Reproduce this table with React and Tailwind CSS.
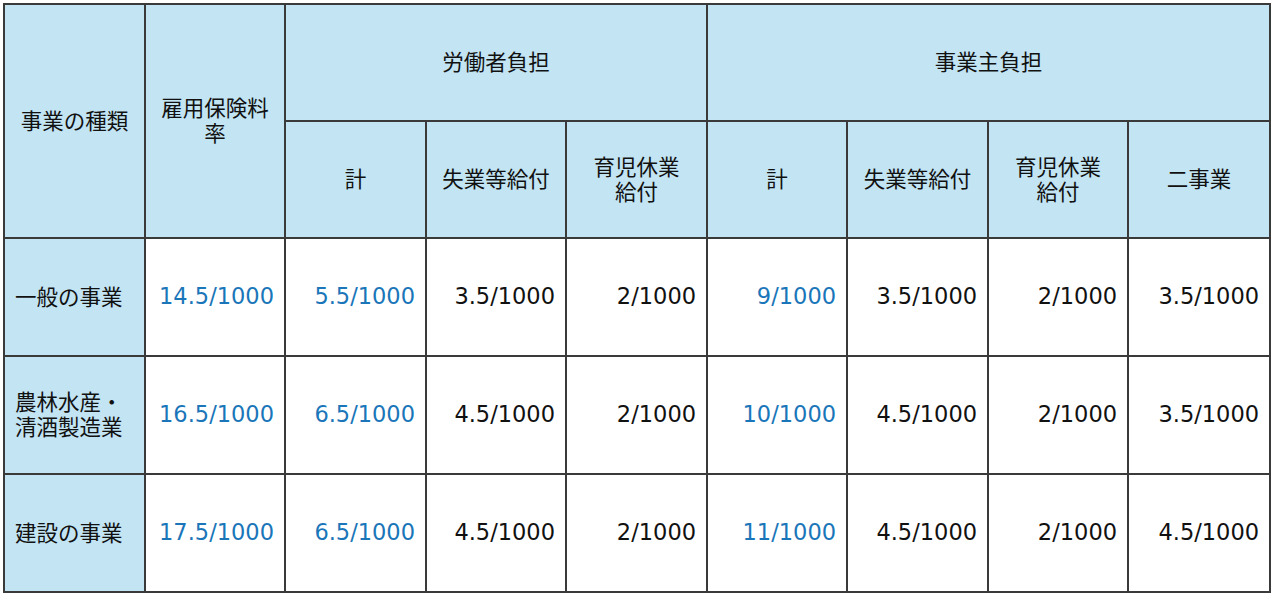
import React from 'react';

// 雇用保険料率の表
const rows = [
  { label: '一般の事業', rate: '14.5/1000', wTotal: '5.5/1000', wUnemp: '3.5/1000', wChild: '2/1000', eTotal: '9/1000', eUnemp: '3.5/1000', eChild: '2/1000', eTwo: '3.5/1000' },
  { label: <>農林水産・<br />清酒製造業</>, rate: '16.5/1000', wTotal: '6.5/1000', wUnemp: '4.5/1000', wChild: '2/1000', eTotal: '10/1000', eUnemp: '4.5/1000', eChild: '2/1000', eTwo: '3.5/1000' },
  { label: '建設の事業', rate: '17.5/1000', wTotal: '6.5/1000', wUnemp: '4.5/1000', wChild: '2/1000', eTotal: '11/1000', eUnemp: '4.5/1000', eChild: '2/1000', eTwo: '4.5/1000' },
];

const font = "font-['DejaVu_Sans','Noto_Sans_CJK_JP',sans-serif]";
const border = 'border-2 border-[#3a3a3a]';
const head = `${border} bg-[#c2e4f3] text-center align-middle text-[21.5px] leading-[25px] text-[#111] px-[8px] font-normal`;
const num = `${border} bg-white text-right align-middle text-[22.5px] pr-[10px]`;

export default function App() {
  return (
    <div className={`w-[1272px] h-[595px] bg-white pt-[3px] pl-[3px] ${font}`}>
      <table className="table-fixed border-collapse w-[1266px]">
        <colgroup>
          <col className="w-[141px]" />
          <col className="w-[140px]" />
          <col className="w-[141px]" />
          <col className="w-[140px]" />
          <col className="w-[141px]" />
          <col className="w-[140px]" />
          <col className="w-[141px]" />
          <col className="w-[140px]" />
          <col className="w-[142px]" />
        </colgroup>
        <thead>
          <tr className="h-[117px]">
            <th rowSpan={2} className={head}>事業の種類</th>
            <th rowSpan={2} className={head}>雇用保険料<br />率</th>
            <th colSpan={3} className={head}>労働者負担</th>
            <th colSpan={4} className={head}>事業主負担</th>
          </tr>
          <tr className="h-[117px]">
            <th className={head}>計</th>
            <th className={head}>失業等給付</th>
            <th className={head}>育児休業<br />給付</th>
            <th className={head}>計</th>
            <th className={head}>失業等給付</th>
            <th className={head}>育児休業<br />給付</th>
            <th className={head}>二事業</th>
          </tr>
        </thead>
        <tbody>
          {rows.map((r, i) => (
            <tr key={i} className="h-[118px]">
              <td className={`${border} bg-[#c2e4f3] text-left align-middle text-[21.5px] leading-[25px] text-[#111] pl-[10px]`}>{r.label}</td>
              <td className={`${num} text-[#1a76b9]`}>{r.rate}</td>
              <td className={`${num} text-[#1a76b9]`}>{r.wTotal}</td>
              <td className={`${num} text-[#111]`}>{r.wUnemp}</td>
              <td className={`${num} text-[#111]`}>{r.wChild}</td>
              <td className={`${num} text-[#1a76b9]`}>{r.eTotal}</td>
              <td className={`${num} text-[#111]`}>{r.eUnemp}</td>
              <td className={`${num} text-[#111]`}>{r.eChild}</td>
              <td className={`${num} text-[#111]`}>{r.eTwo}</td>
            </tr>
          ))}
        </tbody>
      </table>
    </div>
  );
}
